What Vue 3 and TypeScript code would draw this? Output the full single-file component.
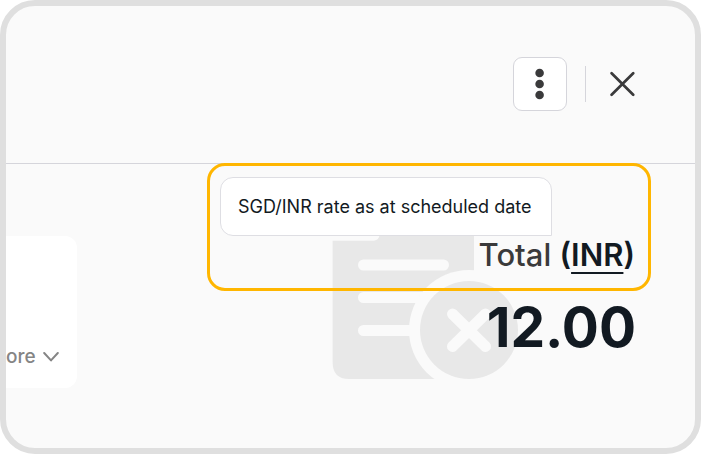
<script setup lang="ts">
import { ref } from 'vue'

const currency = ref<string>('INR')
const amount = ref<string>('12.00')
const rateNote = ref<string>('SGD/INR rate as at scheduled date')
</script>

<template>
  <main class="frame">
    <header class="toolbar">
      <button class="menu" type="button" aria-label="More options">
        <svg width="10" height="32" viewBox="0 0 10 32" fill="#3a3a3b" aria-hidden="true">
          <circle cx="4.6" cy="5" r="4.3" />
          <circle cx="4.6" cy="16" r="4.3" />
          <circle cx="4.6" cy="27" r="4.3" />
        </svg>
      </button>
      <span class="divider"></span>
      <button class="close" type="button" aria-label="Close">
        <svg width="26" height="26" viewBox="0 0 26 26" fill="none" stroke="#3a3a3b" stroke-width="2.7" stroke-linecap="round" aria-hidden="true">
          <path d="M2.600 2.300L24.200 23.700M24.200 2.300L2.600 23.700" />
        </svg>
      </button>
    </header>

    <div class="content">
      <section class="side">
        <button class="more" type="button">
          <span>ore</span>
          <svg width="16" height="10" viewBox="0 0 16 10" fill="none" stroke="#858585" stroke-width="2" stroke-linecap="round" stroke-linejoin="round" aria-hidden="true">
            <path d="M1.2 1L8 8.4L14.8 1" />
          </svg>
        </button>
      </section>

      <section class="summary">
        <svg class="art" width="188" height="146" viewBox="0 0 188 146" aria-hidden="true">
          <path fill="#e8e8e8" d="M0.6 5.700H42Q47 5 47.5 0H142V129Q142 144 126 144H17Q0.6 144 0.6 127Z" />
          <g stroke="#fafafa" stroke-width="11" stroke-linecap="round">
            <path d="M31.5 30H111.500M31.500 62.500H106M31.500 95.500H100" />
          </g>
          <circle cx="137" cy="95" r="60" fill="#fafafa" />
          <circle cx="137" cy="95" r="49" fill="#e8e8e8" />
          <path d="M120.500 79L153.500 111.500M153.500 79L120.500 111.500" stroke="#fafafa" stroke-width="11" stroke-linecap="round" />
        </svg>
        <div class="highlight">
          <p class="tooltip" role="tooltip">{{ rateNote }}</p>
          <h2 class="label">Total <strong>(<span class="currency">{{ currency }}</span>)</strong></h2>
        </div>
        <p class="amount">{{ amount }}</p>
      </section>
    </div>
  </main>
</template>

<style>
body {
  margin: 0;
  background: #fff;
}
</style>

<style scoped>
.frame {
  box-sizing: border-box;
  display: flex;
  flex-direction: column;
  min-height: calc(100vh - 1px);
  overflow: hidden;
  border: 6px solid #dfdfdf;
  border-radius: 35px;
  background: #fafafa;
  color: #121a22;
  font-family: Inter, "Liberation Sans", sans-serif;
}

.toolbar {
  display: flex;
  align-items: center;
  justify-content: flex-end;
  gap: 18px;
  padding: 51px 60px 52px 0;
  border-bottom: 1px solid #d5d5db;
}

button {
  display: flex;
  align-items: center;
  justify-content: center;
  padding: 0;
  border: 0;
  background: none;
  cursor: pointer;
}

.menu {
  box-sizing: border-box;
  width: 54px;
  height: 54px;
  border: 1px solid #d5d5db;
  border-radius: 9px;
  background: #fff;
}

.divider {
  width: 1px;
  height: 36px;
  margin-right: 5px;
  background: #d5d5db;
}

.content {
  display: flex;
  align-items: flex-start;
  justify-content: space-between;
}

.side {
  box-sizing: border-box;
  display: flex;
  align-items: flex-end;
  width: 71px;
  height: 152px;
  margin-top: 72px;
  padding-bottom: 19px;
  border-radius: 0 12px 12px 0;
  background: #fff;
}

.more {
  gap: 7px;
  color: #858585;
  font: 500 19px/24px Inter, "Liberation Sans", sans-serif;
}

.summary {
  position: relative;
  margin-top: -1px;
  margin-right: 44px;
}

.highlight {
  position: relative;
  box-sizing: border-box;
  width: 444px;
  padding: 11px 13px 14px 10px;
  border: 3px solid #ffb600;
  border-radius: 18px;
}

.art {
  position: absolute;
  top: 72px;
  left: 125px;
}

.tooltip {
  box-sizing: border-box;
  width: 332px;
  margin: 0;
  padding: 17px;
  border: 1px solid #dedee3;
  border-radius: 13px 13px 0 13px;
  background: #fff;
  font-size: 18px;
  line-height: 23px;
  white-space: nowrap;
}

.label {
  margin: 0;
  color: #3a3a3b;
  font-size: 31px;
  line-height: 38px;
  font-weight: 500;
  text-align: right;
}

.label strong {
  color: #121a22;
  font-weight: 600;
}

.currency {
  text-decoration: underline;
  text-decoration-thickness: 2px;
  text-underline-offset: 6px;
}

.amount {
  position: relative;
  margin: 0 15px 0 0;
  font-size: 55px;
  line-height: 73px;
  font-weight: 700;
  text-align: right;
}
</style>
